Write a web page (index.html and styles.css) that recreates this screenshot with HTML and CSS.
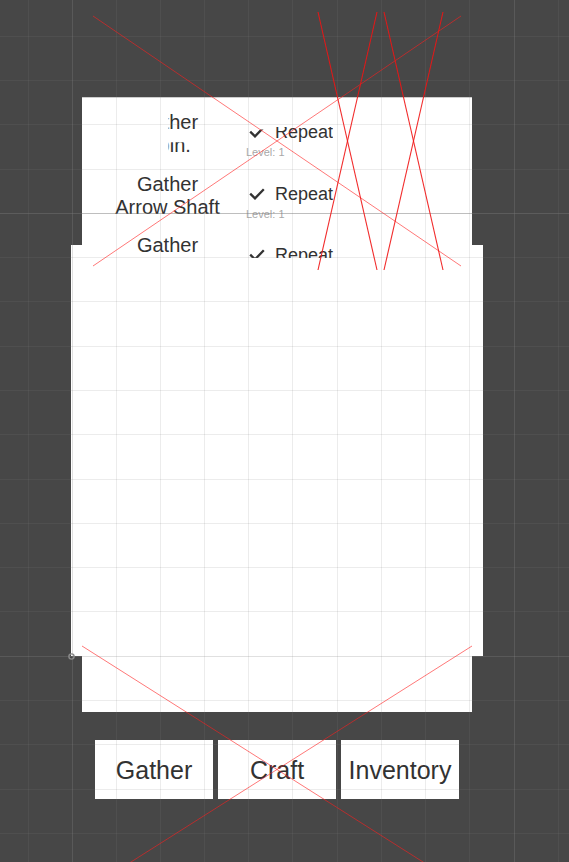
FILE: index.html
```html
<!DOCTYPE html>
<html>
<head>
<meta charset="utf-8">
<link rel="stylesheet" href="styles.css">
</head>
<body>
<div class="stage">
  <div class="panel panel-back"></div>
  <div class="panel panel-front"></div>

  <div class="list">
    <div class="row">
      <div class="label">
        <span class="line cut-l1">Gather</span>
        <span class="line cut-l2">Coin.</span>
      </div>
      <div class="toggle">
        <div class="toggle-line">
          <svg class="check cut-check" viewBox="0 0 16 12" width="16" height="12"><path d="M1.2 5.6 L6 10.4 L14.8 1.2" fill="none" stroke="#333" stroke-width="2.3"/></svg>
          <span class="repeat cut-repeat">Repeat</span>
        </div>
        <div class="level">Level: 1</div>
      </div>
    </div>
    <div class="row">
      <div class="label">
        <span class="line">Gather</span>
        <span class="line">Arrow Shaft</span>
      </div>
      <div class="toggle">
        <div class="toggle-line">
          <svg class="check" viewBox="0 0 16 12" width="16" height="12"><path d="M1.2 5.6 L6 10.4 L14.8 1.2" fill="none" stroke="#333" stroke-width="2.3"/></svg>
          <span class="repeat">Repeat</span>
        </div>
        <div class="level">Level: 1</div>
      </div>
    </div>
    <div class="row">
      <div class="label">
        <span class="line">Gather</span>
        <span class="line">Wood</span>
      </div>
      <div class="toggle">
        <div class="toggle-line">
          <svg class="check" viewBox="0 0 16 12" width="16" height="12"><path d="M1.2 5.6 L6 10.4 L14.8 1.2" fill="none" stroke="#333" stroke-width="2.3"/></svg>
          <span class="repeat">Repeat</span>
        </div>
        <div class="level">Level: 1</div>
      </div>
    </div>
  </div>

  <div class="tabs">
    <div class="tab">Gather</div>
    <div class="tab">Craft</div>
    <div class="tab">Inventory</div>
  </div>

  <svg class="overlay grid" width="569" height="862" viewBox="0 0 569 862" shape-rendering="crispEdges">
    <g stroke="rgba(130,130,130,0.15)" stroke-width="1">
      <line x1="28.5" y1="0" x2="28.5" y2="862"/>
      <line x1="116.5" y1="0" x2="116.5" y2="862"/>
      <line x1="160.5" y1="0" x2="160.5" y2="862"/>
      <line x1="204.5" y1="0" x2="204.5" y2="862"/>
      <line x1="248.5" y1="0" x2="248.5" y2="862"/>
      <line x1="292.5" y1="0" x2="292.5" y2="862"/>
      <line x1="337.5" y1="0" x2="337.5" y2="862"/>
      <line x1="381.5" y1="0" x2="381.5" y2="862"/>
      <line x1="425.5" y1="0" x2="425.5" y2="862"/>
      <line x1="469.5" y1="0" x2="469.5" y2="862"/>
      <line x1="558.5" y1="0" x2="558.5" y2="862"/>
      <line x1="0" y1="36.5" x2="569" y2="36.5"/>
      <line x1="0" y1="80.5" x2="569" y2="80.5"/>
      <line x1="0" y1="124.5" x2="569" y2="124.5"/>
      <line x1="0" y1="169.5" x2="569" y2="169.5"/>
      <line x1="0" y1="257.5" x2="569" y2="257.5"/>
      <line x1="0" y1="301.5" x2="569" y2="301.5"/>
      <line x1="0" y1="346.5" x2="569" y2="346.5"/>
      <line x1="0" y1="390.5" x2="569" y2="390.5"/>
      <line x1="0" y1="434.5" x2="569" y2="434.5"/>
      <line x1="0" y1="479.5" x2="569" y2="479.5"/>
      <line x1="0" y1="523.5" x2="569" y2="523.5"/>
      <line x1="0" y1="567.5" x2="569" y2="567.5"/>
      <line x1="0" y1="611.5" x2="569" y2="611.5"/>
      <line x1="0" y1="700.5" x2="569" y2="700.5"/>
      <line x1="0" y1="744.5" x2="569" y2="744.5"/>
      <line x1="0" y1="789.5" x2="569" y2="789.5"/>
      <line x1="0" y1="833.5" x2="569" y2="833.5"/>
    </g>
    <g stroke="rgba(140,140,140,0.27)" stroke-width="1">
      <line x1="72.5" y1="0" x2="72.5" y2="862"/>
      <line x1="514.5" y1="0" x2="514.5" y2="862"/>
      <line x1="0" y1="656.5" x2="569" y2="656.5"/>
    </g>
    <line x1="0" y1="213.5" x2="569" y2="213.5" stroke="rgba(117,117,117,0.47)" stroke-width="1"/>
    <circle cx="71.5" cy="656.5" r="2.6" fill="none" stroke="#8a8a8a" stroke-width="1.4" shape-rendering="auto"/>
  </svg>

  <svg class="overlay gizmos" width="569" height="862" viewBox="0 0 569 862">
    <g stroke="rgba(255,30,30,0.6)" stroke-width="1" fill="none">
      <line x1="93" y1="16" x2="461" y2="266"/>
      <line x1="461" y1="16" x2="93" y2="266"/>
      <line x1="82" y1="646" x2="472" y2="893"/>
      <line x1="472" y1="646" x2="82" y2="893"/>
    </g>
    <g stroke="rgba(240,20,20,0.9)" stroke-width="1.1" fill="none">
      <line x1="318" y1="12" x2="377" y2="270"/>
      <line x1="377" y1="12" x2="318" y2="270"/>
      <line x1="384" y1="12" x2="443" y2="270"/>
      <line x1="443" y1="12" x2="384" y2="270"/>
    </g>
  </svg>
</div>
</body>
</html>
```

FILE: styles.css
```css
html, body {
  margin: 0;
  padding: 0;
  background: #474747;
}

body {
  width: 569px;
  height: 862px;
  overflow: hidden;
  font-family: "Liberation Sans", Arial, sans-serif;
  color: #323232;
}

.stage {
  position: relative;
  width: 569px;
  height: 862px;
}

/* scene-view objects placed on the free canvas */
.panel {
  position: absolute;
  background: #ffffff;
  box-sizing: border-box;
}

.panel-back {
  left: 82px;
  top: 97px;
  width: 390px;
  height: 615px;
  border-top: 1px solid #cdcdcd;
}

.panel-front {
  left: 71px;
  top: 245px;
  width: 412px;
  height: 411px;
}

.list {
  position: absolute;
  left: 82px;
  top: 97px;
  width: 390px;
  height: 161px;
  overflow: hidden;
  box-sizing: border-box;
  padding: 6.5px 0 0 30px;
  display: flex;
  flex-direction: column;
}

.row {
  display: grid;
  grid-template-columns: 111px 1fr;
  column-gap: 23px;
  height: 61.5px;
  flex: none;
}

.label {
  align-self: center;
  text-align: center;
  font-size: 20px;
  line-height: 23px;
}

.line {
  display: block;
  white-space: nowrap;
}

.toggle {
  padding-top: 18.5px;
}

.toggle-line {
  display: flex;
  align-items: center;
  height: 20px;
}

.check {
  display: block;
  margin-left: 3px;
  margin-right: 10px;
  flex: none;
}

.repeat {
  font-size: 18px;
  line-height: 20px;
}

.level {
  margin-top: 4px;
  font-size: 11px;
  line-height: 13px;
  color: #a8a8a8;
}

/* partially culled glyphs in the first (masked) row */
.cut-l1 {
  clip-path: inset(0 0 0 56.5px);
}

.cut-l2 {
  clip-path: inset(8px 0 0 56.5px);
}

.cut-repeat {
  clip-path: inset(5px 0 0 0);
}

.cut-check {
  clip-path: inset(3.5px 0 0 0);
}

.tabs {
  position: absolute;
  left: 95px;
  top: 740px;
  display: flex;
  gap: 5px;
}

.tab {
  width: 118px;
  height: 59px;
  box-sizing: border-box;
  padding-top: 1px;
  background: #ffffff;
  display: flex;
  align-items: center;
  justify-content: center;
  font-size: 25px;
  color: #323232;
  white-space: nowrap;
}

.overlay {
  position: absolute;
  left: 0;
  top: 0;
  pointer-events: none;
}

.grid {
  z-index: 1;
}

.gizmos {
  z-index: 2;
}
```
